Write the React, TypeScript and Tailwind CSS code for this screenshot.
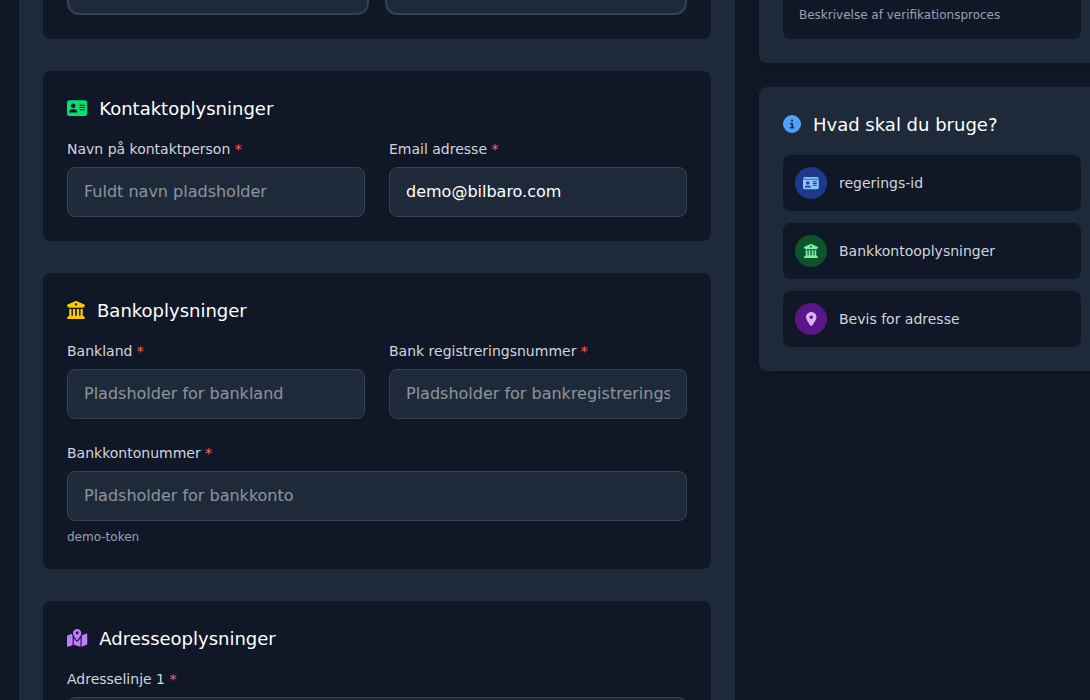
import type { ReactNode } from "react";
import {
  FaAddressCard,
  FaBuildingColumns,
  FaCircleInfo,
  FaIdCard,
  FaLocationDot,
  FaMapLocationDot,
} from "react-icons/fa6";

type FieldProps = {
  label: string;
  placeholder?: string;
  value?: string;
  hint?: string;
};

function Field({ label, placeholder, value, hint }: FieldProps) {
  return (
    <div>
      <label className="block text-sm font-medium text-gray-300 mb-2">
        {label} <span className="text-red-400">*</span>
      </label>
      <input
        type="text"
        placeholder={placeholder}
        defaultValue={value}
        className="block w-full px-4 py-3 rounded-lg border border-gray-700 bg-gray-800 text-white leading-6 outline-none"
      />
      {hint && <p className="mt-2 text-xs text-gray-400">{hint}</p>}
    </div>
  );
}

function Section({ icon, title, children }: { icon: ReactNode; title: string; children: ReactNode }) {
  return (
    <section className="bg-gray-900 rounded-lg p-6">
      <h3 className="flex items-center gap-3 text-lg font-medium text-white mb-4">
        {icon}
        {title}
      </h3>
      {children}
    </section>
  );
}

const requirements = [
  {
    text: "regerings-id",
    circle: "bg-blue-900",
    icon: <FaIdCard className="w-[15.75px] h-3.5 mb-px overflow-visible text-blue-300" />,
  },
  {
    text: "Bankkontooplysninger",
    circle: "bg-green-900",
    icon: <FaBuildingColumns className="w-3.5 h-3.5 mb-px overflow-visible text-green-300" />,
  },
  {
    text: "Bevis for adresse",
    circle: "bg-purple-900",
    icon: <FaLocationDot className="w-[10.5px] h-3.5 overflow-visible text-purple-300" />,
  },
];

export default function App() {
  return (
    <div className="h-[700px] overflow-hidden bg-gray-900 font-['DejaVu_Sans',sans-serif]">
      <div className="flex items-start gap-6 w-[1086px] ml-[19px] -mt-16">
        {/* Form */}
        <main className="w-[716px] shrink-0 bg-gray-800 rounded-lg shadow-lg p-6 flex flex-col gap-8">
          <section className="bg-gray-900 rounded-lg p-6 grid grid-cols-2 gap-4">
            <div className="h-[31px] rounded-xl border-2 border-gray-700 bg-gray-800" />
            <div className="h-[31px] rounded-xl border-2 border-gray-700 bg-gray-800" />
          </section>

          <Section
            icon={<FaAddressCard className="w-[20.25px] h-[18px] mb-0.5 overflow-visible text-green-400" />}
            title="Kontaktoplysninger"
          >
            <div className="grid grid-cols-2 gap-6">
              <Field label="Navn på kontaktperson" placeholder="Fuldt navn pladsholder" />
              <Field label="Email adresse" value="demo@bilbaro.com" />
            </div>
          </Section>

          <Section
            icon={<FaBuildingColumns className="w-[18px] h-[18px] mb-0.5 overflow-visible text-yellow-400" />}
            title="Bankoplysninger"
          >
            <div className="grid grid-cols-2 gap-6">
              <Field label="Bankland" placeholder="Pladsholder for bankland" />
              <Field
                label="Bank registreringsnummer"
                placeholder="Pladsholder for bankregistreringsnummer"
              />
              <div className="col-span-2">
                <Field
                  label="Bankkontonummer"
                  placeholder="Pladsholder for bankkonto"
                  hint="demo-token"
                />
              </div>
            </div>
          </Section>

          <Section
            icon={<FaMapLocationDot className="w-[20.25px] h-[18px] mb-0.5 overflow-visible text-purple-400" />}
            title="Adresseoplysninger"
          >
            <Field label="Adresselinje 1" />
          </Section>
        </main>

        {/* Sidebar */}
        <aside className="flex-1 flex flex-col gap-6">
          <div className="bg-gray-800 rounded-lg shadow-lg p-6">
            <div className="h-[79px] flex items-end bg-gray-900 rounded-lg p-4">
              <p className="text-xs text-gray-400">Beskrivelse af verifikationsproces</p>
            </div>
          </div>

          <div className="bg-gray-800 rounded-lg shadow-lg p-6">
            <h3 className="flex items-center gap-3 text-lg font-medium text-white mb-4">
              <FaCircleInfo className="w-[18px] h-[18px] mb-0.5 overflow-visible text-blue-400" />
              Hvad skal du bruge?
            </h3>
            <ul className="space-y-3">
              {requirements.map((item) => (
                <li key={item.text} className="flex items-center gap-3 p-3 bg-gray-900 rounded-lg">
                  <div className={`w-8 h-8 rounded-full flex items-center justify-center ${item.circle}`}>
                    {item.icon}
                  </div>
                  <span className="text-sm text-gray-300">{item.text}</span>
                </li>
              ))}
            </ul>
          </div>
        </aside>
      </div>
    </div>
  );
}
